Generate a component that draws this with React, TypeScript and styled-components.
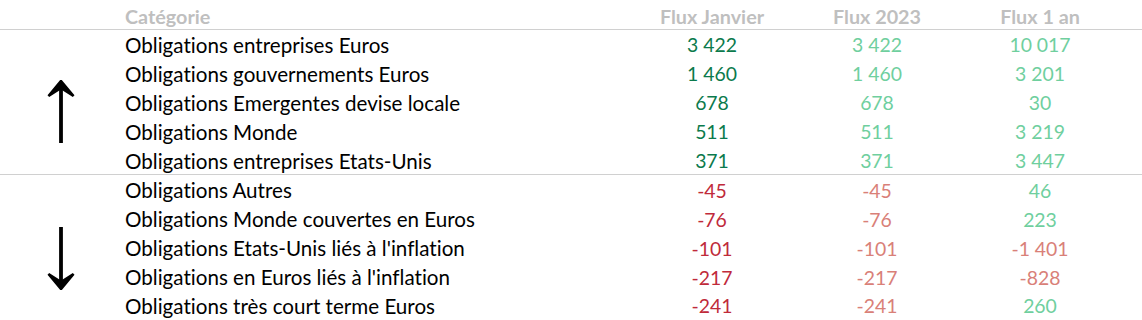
import React from "react";
import styled, { createGlobalStyle } from "styled-components";

const Global = createGlobalStyle`
  html, body { margin: 0; padding: 0; background: #ffffff; }
  body {
    font-family: Lato, "Open Sans", sans-serif;
    font-variant-ligatures: none;
    font-feature-settings: "liga" 0, "clig" 0;
  }
`;

const COLS = "125px 505px 164px 166px 160px 22px";

const Table = styled.div`
  width: 1142px;
  display: flex;
  flex-direction: column;
`;

const HeaderRow = styled.div`
  display: grid;
  grid-template-columns: ${COLS};
  height: 29px;
  align-items: center;
  border-bottom: 1px solid #d0d0d0;
`;

const HeadCell = styled.div<{ $align?: "left" | "center" }>`
  font-weight: 700;
  font-size: 19.8px;
  color: #bfbfbf;
  text-align: ${(p) => p.$align ?? "center"};
  padding-top: 2px;
`;

const Group = styled.div<{ $divider?: boolean }>`
  display: grid;
  grid-template-columns: ${COLS};
  grid-auto-rows: 28.9px;
  border-bottom: ${(p) => (p.$divider ? "1px solid #d0d0d0" : "none")};
`;

const ArrowCell = styled.div<{ $rows: number }>`
  grid-column: 1;
  grid-row: 1 / span ${(p) => p.$rows};
  display: flex;
  align-items: center;
  justify-content: center;
  padding-top: 20px;
  margin-right: 3px;
`;

const Label = styled.div`
  grid-column: 2;
  font-size: 20.6px;
  color: #000000;
  display: flex;
  align-items: center;
  white-space: nowrap;
  padding-top: 1px;
`;

const Num = styled.div<{ $color: string }>`
  font-size: 19.4px;
  color: ${(p) => p.$color};
  display: flex;
  align-items: center;
  justify-content: center;
  white-space: nowrap;
  padding-top: 1px;
`;

const DARK_GREEN = "#0b7a4c";
const LIGHT_GREEN = "#6fcf9e";
const DARK_RED = "#c02a3a";
const LIGHT_RED = "#d98078";

type Row = { label: string; jan: number; y23: number; y1: number };

const fmt = (n: number) => {
  const s = Math.abs(n).toString().replace(/\B(?=(\d{3})+(?!\d))/g, "\u00a0");
  return (n < 0 ? "-" : "") + s;
};

const up: Row[] = [
  { label: "Obligations entreprises Euros", jan: 3422, y23: 3422, y1: 10017 },
  { label: "Obligations gouvernements Euros", jan: 1460, y23: 1460, y1: 3201 },
  { label: "Obligations Emergentes devise locale", jan: 678, y23: 678, y1: 30 },
  { label: "Obligations Monde", jan: 511, y23: 511, y1: 3219 },
  { label: "Obligations entreprises Etats-Unis", jan: 371, y23: 371, y1: 3447 },
];

const down: Row[] = [
  { label: "Obligations Autres", jan: -45, y23: -45, y1: 46 },
  { label: "Obligations Monde couvertes en Euros", jan: -76, y23: -76, y1: 223 },
  { label: "Obligations Etats-Unis liés à l'inflation", jan: -101, y23: -101, y1: -1401 },
  { label: "Obligations en Euros liés à l'inflation", jan: -217, y23: -217, y1: -828 },
  { label: "Obligations très court terme Euros", jan: -241, y23: -241, y1: 260 },
];

const Arrow = ({ dir }: { dir: "up" | "down" }) => (
  <svg
    width="28"
    height="64"
    viewBox="0 0 28 64"
    style={{ transform: dir === "down" ? "rotate(180deg)" : undefined }}
  >
    <line x1="14" y1="4" x2="14" y2="63" stroke="#000" strokeWidth="3.8" />
    <path d="M14 1 L26.5 16 L14 8 L1.5 16 Z" fill="#000" stroke="#000" strokeWidth="2.6" strokeLinejoin="miter" />
  </svg>
);

const GroupRows = ({ rows, dir, divider }: { rows: Row[]; dir: "up" | "down"; divider?: boolean }) => (
  <Group $divider={divider}>
    <ArrowCell $rows={rows.length}>
      <Arrow dir={dir} />
    </ArrowCell>
    {rows.map((r) => (
      <React.Fragment key={r.label}>
        <Label>{r.label}</Label>
        <Num $color={r.jan < 0 ? DARK_RED : DARK_GREEN}>{fmt(r.jan)}</Num>
        <Num $color={r.y23 < 0 ? LIGHT_RED : LIGHT_GREEN}>{fmt(r.y23)}</Num>
        <Num $color={r.y1 < 0 ? LIGHT_RED : LIGHT_GREEN}>{fmt(r.y1)}</Num>
        <div />
      </React.Fragment>
    ))}
  </Group>
);

export default function App() {
  return (
    <>
      <Global />
      <Table>
        <HeaderRow>
          <div />
          <HeadCell $align="left">Catégorie</HeadCell>
          <HeadCell>Flux Janvier</HeadCell>
          <HeadCell>Flux 2023</HeadCell>
          <HeadCell>Flux 1 an</HeadCell>
          <div />
        </HeaderRow>
        <GroupRows rows={up} dir="up" divider />
        <GroupRows rows={down} dir="down" />
      </Table>
    </>
  );
}
